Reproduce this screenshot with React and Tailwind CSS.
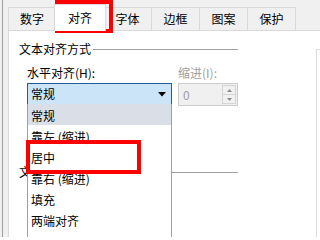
const tabs = ['数字', '对齐', '字体', '边框', '图案', '保护'];
const options = ['常规', '靠左 (缩进)', '居中', '靠右 (缩进)', '填充', '两端对齐'];

function Tab({ label, active }) {
  if (active) {
    return (
      <div className="relative z-10 -mx-[2px] -mb-px flex h-[27px] w-[52px] items-center justify-center border-x border-t border-[#d9d9d9] bg-white">
        {label}
      </div>
    );
  }
  return (
    <div className="-ml-px flex h-[23px] w-[49px] items-center justify-center border-x border-t border-[#d9d9d9] bg-[#f0f0f0] first:ml-0 first:w-[48px]">
      {label}
    </div>
  );
}

function GroupLabel({ text }) {
  return (
    <div className="flex h-[16px] items-center">
      <span className="leading-[16px]">{text}</span>
      <div className="ml-[2px] h-px flex-1 bg-[#a0a0a0]" />
    </div>
  );
}

export default function App() {
  return (
    <div
      className="relative flex h-[237px] w-[320px] overflow-hidden bg-[#f0f0f0] text-[12px] text-black"
      style={{ fontFamily: '"Noto Sans CJK SC", "Noto Sans", sans-serif' }}
    >
      {/* left edge of window */}
      <div className="ml-[2px] w-[6px] border-l border-[#a0a0a0]" />

      <div className="flex flex-1 flex-col">
        {/* Tabs */}
        <div className="flex h-[30px] items-end">
          {tabs.map((t) => (
            <Tab key={t} label={t} active={t === '对齐'} />
          ))}
        </div>

        {/* Panel */}
        <div className="relative flex flex-1 border-l border-t border-[#d9d9d9] bg-white">
          <div className="flex w-[229px] flex-col pl-[10px] pt-[10px]">
            <GroupLabel text="文本对齐方式" />
            <div className="flex flex-col pl-[8px]">
              <div className="mt-[8px] flex h-[16px] items-center leading-[16px]">
                <span className="w-[151px]">水平对齐(H):</span>
                <span className="text-[#a0a0a0]">缩进(I):</span>
              </div>
              <div className="mt-[2px] flex items-start">
                <div className="flex h-[22px] w-[145px] items-center justify-between border border-[#1f5c99] bg-[#cce4f7] pl-[3px] pr-[5px]">
                  <span>常规</span>
                  <svg width="8" height="5" viewBox="0 0 8 5">
                    <path d="M0 0 L8 0 L4 4.5 Z" fill="#000" />
                  </svg>
                </div>
                <div className="ml-[6px] flex h-[23px] w-[60px] items-center justify-between border border-[#cccccc] bg-[#f0f0f0] pl-[4px] pr-[1px]">
                  <span className="text-[#a0a0a0]">0</span>
                  <div className="flex flex-col">
                    <div className="flex h-[10px] w-[14px] items-center justify-center border border-[#d4d4d4]">
                      <svg width="5" height="3" viewBox="0 0 5 3">
                        <path d="M0 3 L5 3 L2.5 0 Z" fill="#8a8a8a" />
                      </svg>
                    </div>
                    <div className="-mt-px flex h-[10px] w-[14px] items-center justify-center border border-[#d4d4d4]">
                      <svg width="5" height="3" viewBox="0 0 5 3">
                        <path d="M0 0 L5 0 L2.5 3 Z" fill="#8a8a8a" />
                      </svg>
                    </div>
                  </div>
                </div>
              </div>
            </div>
            <div className="mt-[58px]">
              <GroupLabel text="文本方向" />
            </div>
          </div>

          {/* right group box */}
          <div className="ml-auto mt-[18px] w-[4px] border-l border-t border-[#dcdcdc]" />

          {/* open dropdown list */}
          <div className="absolute left-[18px] top-[73px] h-[140px] w-[145px] border-x border-[#a0a0a0] bg-white">
            {options.map((o, i) => (
              <div
                key={o}
                className={`flex h-[21px] items-center pl-[3px] pt-[3px] ${i === 0 ? 'bg-[#dadfe7]' : ''}`}
              >
                {o}
              </div>
            ))}
          </div>
        </div>
      </div>

      {/* red highlight boxes */}
      <div className="absolute left-[55px] top-0 h-[33px] w-[58px] border-[4px] border-[#ff0000]" />
      <div className="absolute left-[26px] top-[140px] h-[34px] w-[115px] border-[4px] border-[#ff0000]" />
    </div>
  );
}
